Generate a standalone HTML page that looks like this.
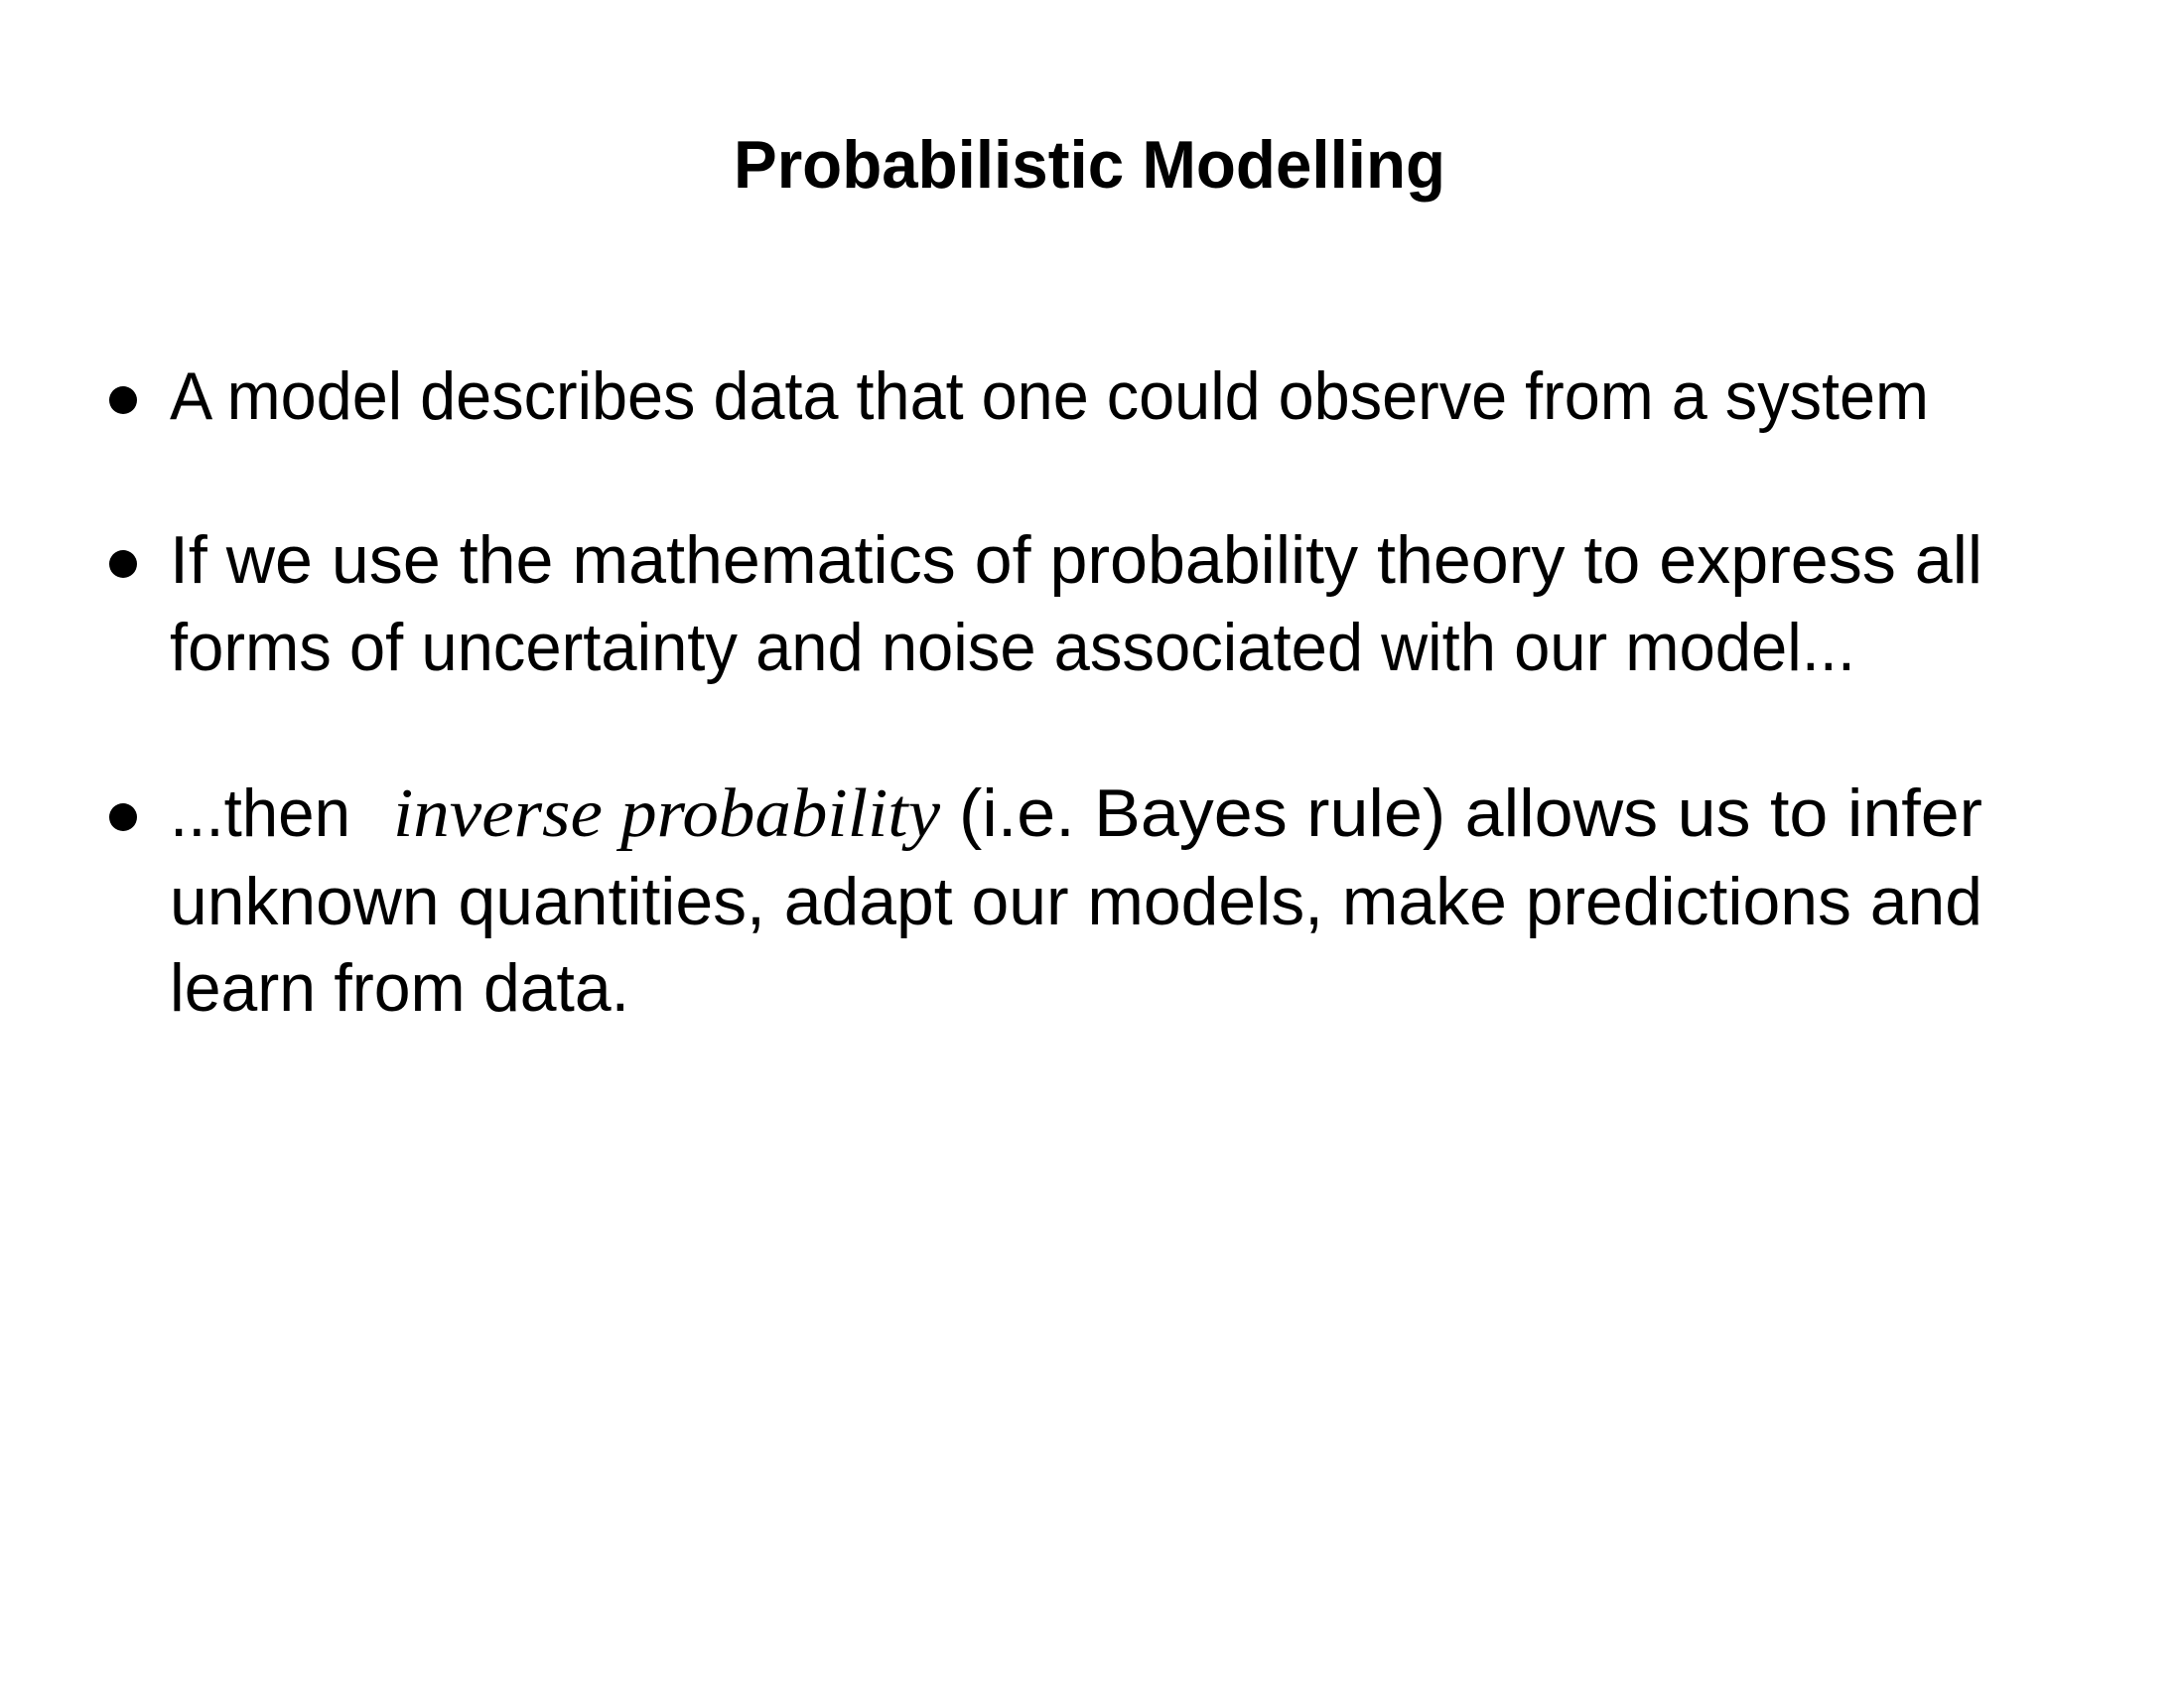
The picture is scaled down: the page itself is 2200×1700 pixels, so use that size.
<!DOCTYPE html>
<html><head><meta charset="utf-8"><style>
html,body{margin:0;padding:0;background:#fff;}
svg{display:block;}
text{font-family:"Liberation Sans",sans-serif;fill:#000;}
.t{font-size:68px;}
.i{font-family:"Liberation Serif",serif;font-style:italic;font-size:70px;}
</style></head><body>
<svg width="2200" height="1700" viewBox="0 0 2200 1700" xmlns="http://www.w3.org/2000/svg">
<text x="739" y="189" style="font-size:68px;font-weight:bold" textLength="717" lengthAdjust="spacingAndGlyphs">Probabilistic Modelling</text>

<circle cx="124" cy="403" r="14"/>
<text class="t" x="171" y="422" textLength="1772" lengthAdjust="spacingAndGlyphs">A model describes data that one could observe from a system</text>

<circle cx="124" cy="568" r="14"/>
<text class="t" x="171" y="587" textLength="1826" lengthAdjust="spacingAndGlyphs">If we use the mathematics of probability theory to express all</text>
<text class="t" x="171" y="675" textLength="1698" lengthAdjust="spacingAndGlyphs">forms of uncertainty and noise associated with our model...</text>

<circle cx="124" cy="823" r="14"/>
<text class="t" x="171" y="842" textLength="182" lengthAdjust="spacingAndGlyphs">...then</text>
<text class="i" x="396" y="842" textLength="551" lengthAdjust="spacingAndGlyphs">inverse probability</text>
<text class="t" x="966" y="842" textLength="1031" lengthAdjust="spacingAndGlyphs">(i.e. Bayes rule) allows us to infer</text>
<text class="t" x="171" y="931" textLength="1826" lengthAdjust="spacingAndGlyphs">unknown quantities, adapt our models, make predictions and</text>
<text class="t" x="171" y="1018" textLength="463" lengthAdjust="spacingAndGlyphs">learn from data.</text>
</svg>
</body></html>
